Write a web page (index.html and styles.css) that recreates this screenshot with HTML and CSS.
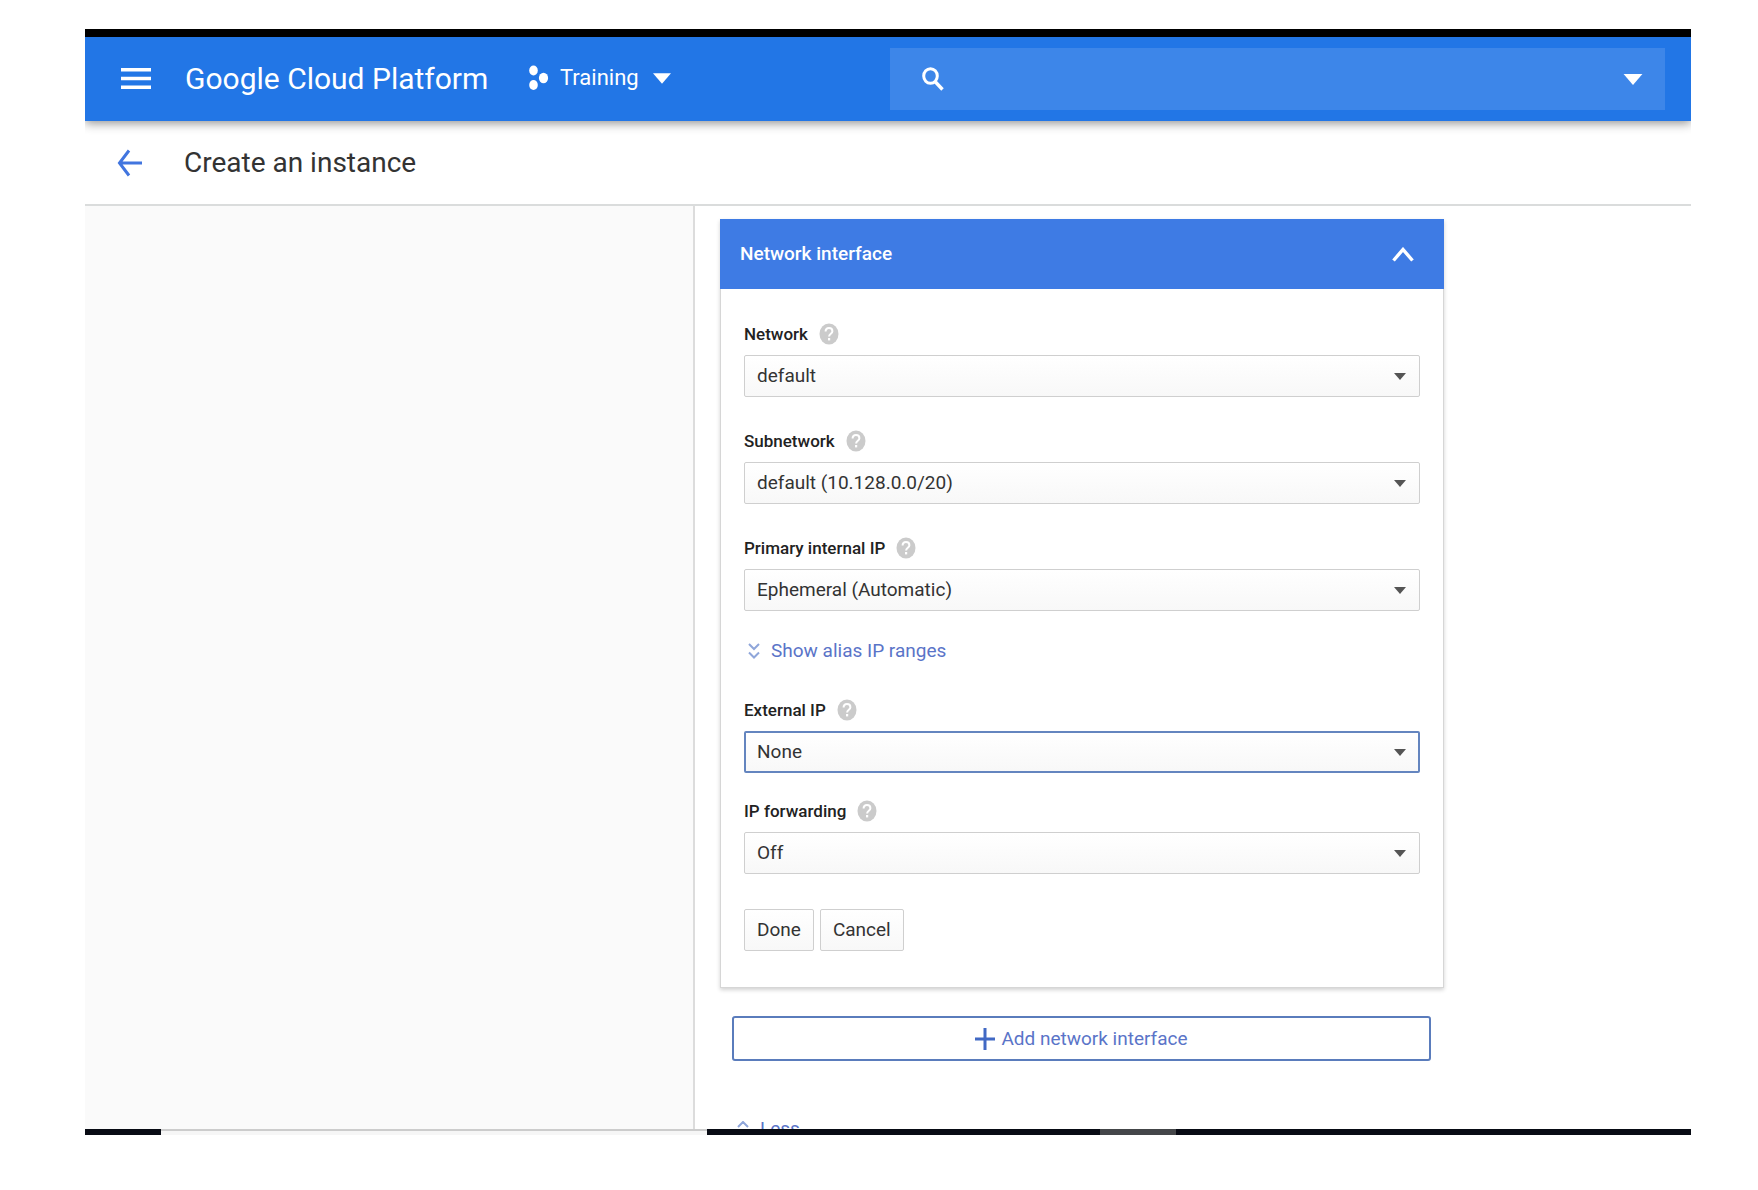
FILE: index.html
```html
<!DOCTYPE html>
<html lang="en">
<head>
<meta charset="utf-8">
<title>Create an instance</title>
<link rel="stylesheet" href="styles.css">
</head>
<body>
<svg class="defs" aria-hidden="true">
  <symbol id="help" viewBox="0 0 20 22"><ellipse cx="10" cy="11" rx="9.5" ry="10.5" fill="#cbcbcb"/><path d="M6.6 8.6C6.6 6.3 8 5 10 5s3.4 1.3 3.4 3.2c0 2.4-3.3 2.6-3.3 5.2" fill="none" stroke="#fff" stroke-width="2"/><rect x="9" y="15" width="2.2" height="2.4" fill="#fff"/></symbol>
  <symbol id="caret" viewBox="0 0 12 7"><path d="M0 0h12L6 7z" fill="currentColor"/></symbol>
</svg>
<div class="window">
  <header class="topbar">
    <button class="icon-button menu" aria-label="Menu"><svg width="30" height="22" viewBox="0 0 30 22"><path d="M0 1.800h30M0 10.500h30M0 19.200h30" stroke="#fff" stroke-width="3.400"/></svg></button>
    <a class="brand" href="#">Google Cloud Platform</a>
    <button class="project">
      <svg width="22" height="26" viewBox="0 0 22 26" fill="#fff"><ellipse cx="5.500" cy="5.500" rx="4.300" ry="5"/><ellipse cx="5.500" cy="20" rx="4.300" ry="5"/><ellipse cx="15.500" cy="13" rx="4.600" ry="5.200"/></svg>
      <span>Training</span>
      <svg class="project-caret" width="18" height="11"><use href="#caret"/></svg>
    </button>
    <div class="search">
      <svg width="22" height="24" viewBox="0 0 22 24"><ellipse cx="8.500" cy="9" rx="6.800" ry="7.300" fill="none" stroke="#fff" stroke-width="3"/><path d="M13 14.500l7.500 8" stroke="#fff" stroke-width="3.400"/></svg>
      <input class="search-input" type="search" aria-label="Search">
      <svg width="20" height="11"><use href="#caret"/></svg>
    </div>
  </header>
  <div class="titlebar">
    <button class="icon-button back" aria-label="Back"><svg width="26" height="28" viewBox="0 0 26 28" fill="none" stroke="#4175df" stroke-width="3"><path d="M12 1.500L2.500 14 12 26.500M2.500 14h22.500"/></svg></button>
    <h1>Create an instance</h1>
  </div>
  <div class="content">
    <aside class="sidebar"></aside>
    <main class="main">
      <section class="card">
        <button class="card-header"><span>Network interface</span><svg width="22" height="15" viewBox="0 0 22 15"><path d="M1.500 13.500L11 2.500l9.500 11" fill="none" stroke="#fff" stroke-width="3.400"/></svg></button>
        <form class="card-body">
          <div class="field">
            <div class="caption"><label for="network">Network</label><svg width="20" height="22"><use href="#help"/></svg></div>
            <div class="picker"><select id="network"><option>default</option></select><svg width="12" height="7"><use href="#caret"/></svg></div>
          </div>
          <div class="field">
            <div class="caption"><label for="subnetwork">Subnetwork</label><svg width="20" height="22"><use href="#help"/></svg></div>
            <div class="picker"><select id="subnetwork"><option>default (10.128.0.0/20)</option></select><svg width="12" height="7"><use href="#caret"/></svg></div>
          </div>
          <div class="field">
            <div class="caption"><label for="internal">Primary internal IP</label><svg width="20" height="22"><use href="#help"/></svg></div>
            <div class="picker"><select id="internal"><option>Ephemeral (Automatic)</option></select><svg width="12" height="7"><use href="#caret"/></svg></div>
          </div>
          <a class="toggle" href="#"><svg width="12" height="16" viewBox="0 0 12 16"><path d="M1 1l5 5 5-5M1 9.500l5 5 5-5" fill="none" stroke="#8fa6da" stroke-width="2"/></svg>Show alias IP ranges</a>
          <div class="field compact">
            <div class="caption"><label for="external">External IP</label><svg width="20" height="22"><use href="#help"/></svg></div>
            <div class="picker"><select id="external" class="active"><option>None</option></select><svg width="12" height="7"><use href="#caret"/></svg></div>
          </div>
          <div class="field">
            <div class="caption"><label for="forwarding">IP forwarding</label><svg width="20" height="22"><use href="#help"/></svg></div>
            <div class="picker"><select id="forwarding"><option>Off</option></select><svg width="12" height="7"><use href="#caret"/></svg></div>
          </div>
          <div class="actions"><button type="button">Done</button><button type="button">Cancel</button></div>
        </form>
      </section>
      <button class="add"><svg width="20" height="22" viewBox="0 0 20 22"><path d="M10 0v22M0 11h20" stroke="#4169c4" stroke-width="3"/></svg>Add network interface</button>
      <a class="toggle less" href="#"><svg width="12" height="16" viewBox="0 0 12 16"><path d="M1 6l5-5 5 5M1 14.500l5-5 5 5" fill="none" stroke="#8fa6da" stroke-width="2"/></svg>Less</a>
    </main>
  </div>
  <div class="taskbar"><span class="task-dark"></span><span class="task-light"></span><span class="task-dark"></span><span class="task-grey"></span><span class="task-dark"></span></div>
</div>
</body>
</html>
```
FILE: styles.css
```css
* { box-sizing: border-box; }
body {
  margin: 0;
  padding: 29px 67px 55px 85px;
  height: 100vh;
  background: #fff;
  color: #333;
  font: 19px/24px Roboto, "Liberation Sans", sans-serif;
}
button, select, input { font: inherit; color: inherit; }
button { cursor: pointer; }
a { text-decoration: none; }
svg { flex: none; display: block; }
.defs { position: absolute; width: 0; height: 0; }

.window {
  display: flex;
  flex-direction: column;
  height: 100%;
  border-top: 8px solid #000;
  overflow: hidden;
}

.topbar {
  display: flex;
  align-items: center;
  flex: none;
  height: 84px;
  padding: 0 26px 0 36px;
  background: #2276e6;
  color: #fff;
  box-shadow: 0 2px 10px rgba(0, 0, 0, .45);
  z-index: 1;
}
.icon-button, .project { padding: 0; border: 0; background: none; }
.menu { width: 64px; }
.brand { width: 343px; color: #fff; font-size: 30px; line-height: 40px; }
.project { display: flex; align-items: center; gap: 10px; padding-bottom: 2px; font-size: 22px; }
.project-caret { margin-left: 4px; }
.search {
  display: flex;
  align-items: center;
  flex: none;
  width: 775px;
  height: 62px;
  margin-left: auto;
  padding: 0 22px 0 32px;
  background: #3d86e9;
}
.search-input { flex: 1; min-width: 0; border: 0; outline: 0; background: none; }

.titlebar {
  display: flex;
  align-items: center;
  flex: none;
  height: 85px;
  padding-left: 32px;
  border-bottom: 2px solid #dadcdc;
}
.back { width: 67px; }
h1 { margin: 0; font-size: 28px; font-weight: 400; line-height: 36px; }

.content { display: flex; flex: 1; min-height: 0; overflow: hidden; }
.sidebar { flex: none; width: 610px; background: #fafafa; border-right: 2px solid #dcdcdc; }
.main { width: 749px; padding: 13px 0 0 25px; }

.card { border: 1px solid #d6d6d6; border-top: 0; box-shadow: 0 2px 4px rgba(0, 0, 0, .18); }
.card-header {
  display: flex;
  align-items: center;
  justify-content: space-between;
  width: calc(100% + 2px);
  height: 70px;
  margin: 0 -1px;
  padding: 0 30px 0 20px;
  border: 0;
  background: #3e7be4;
  color: #fff;
  font-weight: 500;
}
.card-body { padding: 33px 23px 36px; }
.field { margin-bottom: 32px; }
.compact { margin-bottom: 26px; }
.caption {
  display: flex;
  align-items: center;
  gap: 11px;
  height: 24px;
  margin-bottom: 9px;
  color: #222;
  font-size: 17px;
  font-weight: 500;
}
.picker { display: grid; align-items: center; }
.picker > * { grid-area: 1 / 1; }
.picker svg { justify-self: end; margin-right: 14px; color: #555; pointer-events: none; }
select, .actions button {
  height: 42px;
  padding: 0 12px;
  border: 1px solid #cfcfcf;
  border-radius: 2px;
  background: linear-gradient(#fff, #f8f8f8);
}
select { width: 100%; appearance: none; }
.active { border: 2px solid #6485bf; padding: 0 11px; }
.toggle { display: flex; align-items: center; gap: 11px; height: 24px; margin: -4px 0 35px 4px; color: #5a74c8; }
.actions { display: flex; gap: 6px; margin-top: 35px; }

.add {
  display: flex;
  align-items: center;
  justify-content: center;
  gap: 6px;
  width: calc(100% - 25px);
  height: 45px;
  margin: 28px 12px 0;
  border: 2px solid #5a7cbc;
  border-radius: 3px;
  background: #fff;
  color: #5a74c8;
}
.less { margin: 56px 0 0 17px; }

.taskbar { display: flex; flex: none; height: 6px; }
.task-dark { background: #080b14; }
.task-dark:first-child { width: 76px; }
.task-light { width: 546px; border-top: 2px solid #ccc; background: #f6f6f6; }
.task-dark:nth-child(3) { width: 393px; }
.task-grey { width: 76px; background: #444649; }
.task-dark:last-child { flex: 1; }
```
